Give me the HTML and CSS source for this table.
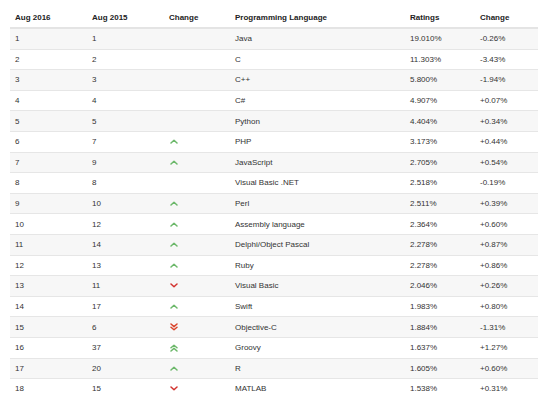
FILE: index.html
```html
<!DOCTYPE html>
<html>
<head>
<meta charset="utf-8">
<link rel="stylesheet" href="styles.css">
</head>
<body>
<table class="tbl">
<colgroup>
<col class="c1"><col class="c2"><col class="c3"><col class="c4"><col class="c5"><col class="c6">
</colgroup>
<thead>
<tr><th>Aug 2016</th><th>Aug 2015</th><th>Change</th><th>Programming Language</th><th>Ratings</th><th>Change</th></tr>
</thead>
<tbody>
<tr><td>1</td><td>1</td><td></td><td>Java</td><td>19.010%</td><td>-0.26%</td></tr>
<tr><td>2</td><td>2</td><td></td><td>C</td><td>11.303%</td><td>-3.43%</td></tr>
<tr><td>3</td><td>3</td><td></td><td>C++</td><td>5.800%</td><td>-1.94%</td></tr>
<tr><td>4</td><td>4</td><td></td><td>C#</td><td>4.907%</td><td>+0.07%</td></tr>
<tr><td>5</td><td>5</td><td></td><td>Python</td><td>4.404%</td><td>+0.34%</td></tr>
<tr><td>6</td><td>7</td><td class="ic"><svg class="up" viewBox="0 0 8 5"><path d="M1 4L4 1.2L7 4"/></svg></td><td>PHP</td><td>3.173%</td><td>+0.44%</td></tr>
<tr><td>7</td><td>9</td><td class="ic"><svg class="up" viewBox="0 0 8 5"><path d="M1 4L4 1.2L7 4"/></svg></td><td>JavaScript</td><td>2.705%</td><td>+0.54%</td></tr>
<tr><td>8</td><td>8</td><td></td><td>Visual Basic .NET</td><td>2.518%</td><td>-0.19%</td></tr>
<tr><td>9</td><td>10</td><td class="ic"><svg class="up" viewBox="0 0 8 5"><path d="M1 4L4 1.2L7 4"/></svg></td><td>Perl</td><td>2.511%</td><td>+0.39%</td></tr>
<tr><td>10</td><td>12</td><td class="ic"><svg class="up" viewBox="0 0 8 5"><path d="M1 4L4 1.2L7 4"/></svg></td><td>Assembly language</td><td>2.364%</td><td>+0.60%</td></tr>
<tr><td>11</td><td>14</td><td class="ic"><svg class="up" viewBox="0 0 8 5"><path d="M1 4L4 1.2L7 4"/></svg></td><td>Delphi/Object Pascal</td><td>2.278%</td><td>+0.87%</td></tr>
<tr><td>12</td><td>13</td><td class="ic"><svg class="up" viewBox="0 0 8 5"><path d="M1 4L4 1.2L7 4"/></svg></td><td>Ruby</td><td>2.278%</td><td>+0.86%</td></tr>
<tr><td>13</td><td>11</td><td class="ic"><svg class="dn" viewBox="0 0 8 5"><path d="M1 1L4 3.8L7 1"/></svg></td><td>Visual Basic</td><td>2.046%</td><td>+0.26%</td></tr>
<tr><td>14</td><td>17</td><td class="ic"><svg class="up" viewBox="0 0 8 5"><path d="M1 4L4 1.2L7 4"/></svg></td><td>Swift</td><td>1.983%</td><td>+0.80%</td></tr>
<tr><td>15</td><td>6</td><td class="ic"><svg class="dn2" viewBox="0 0 8 8"><path d="M1 1L4 3.6L7 1M1 4.2L4 6.8L7 4.2"/></svg></td><td>Objective-C</td><td>1.884%</td><td>-1.31%</td></tr>
<tr><td>16</td><td>37</td><td class="ic"><svg class="up2" viewBox="0 0 8 8"><path d="M1 3.8L4 1.2L7 3.8M1 7L4 4.4L7 7"/></svg></td><td>Groovy</td><td>1.637%</td><td>+1.27%</td></tr>
<tr><td>17</td><td>20</td><td class="ic"><svg class="up" viewBox="0 0 8 5"><path d="M1 4L4 1.2L7 4"/></svg></td><td>R</td><td>1.605%</td><td>+0.60%</td></tr>
<tr><td>18</td><td>15</td><td class="ic"><svg class="dn" viewBox="0 0 8 5"><path d="M1 1L4 3.8L7 1"/></svg></td><td>MATLAB</td><td>1.538%</td><td>+0.31%</td></tr>
</tbody>
</table>
</body>
</html>
```
FILE: styles.css
```css
html, body {
  margin: 0;
  padding: 0;
  background: #fff;
}
body {
  padding: 8px 5px 0 10px;
  font-family: "Liberation Sans", Arial, sans-serif;
  font-size: 8px;
  color: #333;
}
.tbl {
  width: 528px;
  border-collapse: collapse;
  table-layout: fixed;
}
.c1 { width: 77px; }
.c2 { width: 77px; }
.c3 { width: 66px; }
.c4 { width: 175px; }
.c5 { width: 70px; }
.c6 { width: 63px; }
.tbl th {
  text-align: left;
  font-weight: bold;
  color: #222;
  height: 19px;
  padding: 0 5px;
  border-bottom: 2px solid #e4e4e4;
  vertical-align: middle;
}
.tbl td {
  height: 19.6px;
  padding: 0 5px;
  border-top: 1px solid #e6e6e6;
  vertical-align: middle;
  white-space: nowrap;
}
.tbl tbody tr:first-child td {
  border-top: none;
}
.tbl tbody tr:nth-child(odd) td {
  background: #f7f7f7;
}
.ic {
  line-height: 0;
}
.ic svg {
  display: inline-block;
  width: 8px;
  margin-left: 1px;
  fill: none;
  stroke-width: 1.5;
  stroke-linecap: round;
  stroke-linejoin: round;
}
.up, .dn { height: 5px; }
.up2, .dn2 { height: 8px; }
.up, .up2 { stroke: #6cb86a; }
.dn { stroke: #d2332f; }
.dn2 { stroke: #d9442b; }
```
